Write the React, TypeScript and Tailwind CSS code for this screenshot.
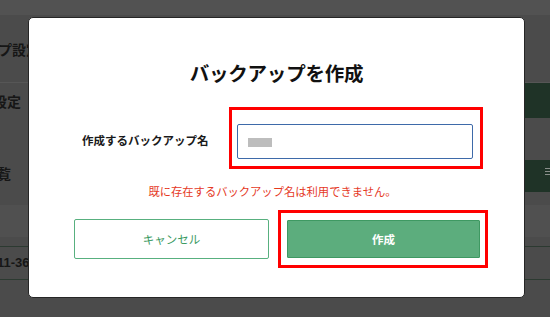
export default function App() {
  return (
    <div className="relative w-[550px] h-[317px] overflow-hidden bg-[#4b4b4b] font-['Noto_Sans_CJK_JP','Noto_Sans',sans-serif]">
      {/* dimmed page behind the dialog */}
      <div className="flex flex-col w-full">
        <div className="h-[15px] bg-[#525252]" />
        <div className="h-[67px] flex items-center">
          <span className="ml-[-72px] text-[14px] font-bold leading-[20px] text-[#161616] whitespace-nowrap">バックアップ設定</span>
        </div>
        <div className="h-[36px] flex items-center justify-between border-t border-[#565656]">
          <span className="ml-[-7px] text-[14px] font-bold leading-[20px] text-[#161616] whitespace-nowrap">設定</span>
          <div className="w-[40px] h-full bg-[#1f3327]" />
        </div>
        <div className="h-[42px]" />
        <div className="h-[32px] flex items-center justify-between">
          <span className="ml-[-17px] mt-[-6px] text-[14px] font-bold leading-[20px] text-[#161616] whitespace-nowrap">一覧</span>
          <div className="w-[40px] h-full bg-[#1f3327] flex items-start justify-end pt-[8px]">
            <div className="w-[5px] flex flex-col gap-[2px]">
              <div className="h-[1px] bg-[#8a8f8b]" />
              <div className="h-[1px] bg-[#8a8f8b]" />
              <div className="h-[1px] bg-[#8a8f8b]" />
            </div>
          </div>
        </div>
        <div className="h-[13px]" />
        <div className="h-[32px] bg-[#505050]" />
        <div className="h-[9px]" />
        <div className="h-[34px] flex items-center border-y border-[#2c3a31]">
          <span className="ml-[-3px] font-['Liberation_Sans',sans-serif] text-[13px] font-bold leading-[16px] text-[#161616] whitespace-nowrap">11-36</span>
        </div>
        <div className="h-[38px]" />
      </div>

      {/* dialog */}
      <div className="absolute left-[28px] top-[17px] w-[497px] h-[281px] bg-white rounded-[5px] border border-[#262626] flex flex-col items-center pt-[41px]">
        <h2 className="h-[28px] leading-[28px] text-[19.5px] font-bold text-[#111] tracking-[-0.2px]">バックアップを作成</h2>

        <div className="w-full flex items-center mt-[20px] pl-[53px]">
          <label className="w-[147px] pt-[3px] text-[11.5px] font-bold leading-[16px] text-[#1a1a1a] whitespace-nowrap">作成するバックアップ名</label>
          <div className="w-[254px] border-[3px] border-[#ff0000] pt-[14px] pb-[7px] pl-[5px] pr-[7px]">
            <div className="h-[35px] w-full border border-[#3e6aa9] rounded-[2px] flex items-center pl-[10px] pt-[2px]">
              <div className="w-[24px] h-[9px] bg-[#bdbdbd] blur-[0.4px]" />
            </div>
          </div>
        </div>

        <p className="mt-[14px] text-[11.3px] leading-[16px] text-[#e5391f] whitespace-nowrap pr-[8px]">既に存在するバックアップ名は利用できません。</p>

        <div className="w-full flex items-center mt-[11px] pl-[45px]">
          <button className="w-[195px] h-[40px] border-[1.5px] border-[#58b07f] rounded-[2px] bg-white text-[11.5px] leading-[16px] text-[#3b9a5f]">キャンセル</button>
          <div className="ml-[9px] w-[210px] border-[3px] border-[#ff0000] pt-[7px] pb-[7px] pl-[6px] pr-[5px]">
            <button className="w-full h-[38px] bg-[#5cad7d] border border-[#3e9962] rounded-[1px] text-[11.5px] font-bold leading-[16px] text-white">作成</button>
          </div>
        </div>
      </div>
    </div>
  );
}
